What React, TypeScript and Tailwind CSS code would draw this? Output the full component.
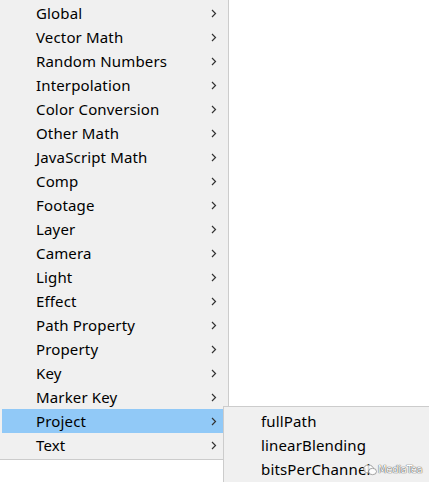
const items = [
  'Global',
  'Vector Math',
  'Random Numbers',
  'Interpolation',
  'Color Conversion',
  'Other Math',
  'JavaScript Math',
  'Comp',
  'Footage',
  'Layer',
  'Camera',
  'Light',
  'Effect',
  'Path Property',
  'Property',
  'Key',
  'Marker Key',
  'Project',
  'Text',
]

const subItems = ['fullPath', 'linearBlending', 'bitsPerChannel']

function Chevron() {
  return (
    <svg width="6" height="9" viewBox="0 0 6 9" className="shrink-0">
      <polyline points="1,1 4.5,4.5 1,8" fill="none" stroke="#333" strokeWidth="1.2" />
    </svg>
  )
}

export default function App() {
  return (
    <div
      className="relative w-[429px] h-[482px] bg-white overflow-hidden text-[15px] text-black"
      style={{ fontFamily: '"Noto Sans", "Liberation Sans", sans-serif' }}
    >
      <div className="w-[229px] bg-[#f0f0f0] border-r border-b border-[#cccccc] pt-px pb-[2px]">
        {items.map(name => (
          <div
            key={name}
            className={`h-6 ml-[2px] mr-[4px] flex items-center pl-[34px] pr-[7px] ${
              name === 'Project' ? 'bg-[#91c9f7]' : ''
            }`}
          >
            <span className="flex-1 leading-none tracking-[0.15px]">{name}</span>
            <Chevron />
          </div>
        ))}
      </div>

      {/* submenu for Project */}
      <div className="absolute left-[223px] top-[406px] w-[220px] h-[90px] bg-[#f0f0f0] border-l border-t border-[#cccccc] pt-[2px]">
        {subItems.map(name => (
          <div key={name} className="h-6 flex items-center pl-[37px] leading-none tracking-[0.15px]">
            {name}
          </div>
        ))}
      </div>

      {/* watermark */}
      <div
        className="absolute left-[363px] top-[462px] flex items-center gap-[1px] text-[10px] text-white [text-shadow:0_0_1px_#444,0_0_1px_#444]"
        style={{ fontFamily: '"DejaVu Sans", sans-serif' }}
      >
        <svg width="14" height="12" viewBox="0 0 14 12" className="opacity-80">
          <ellipse cx="5.5" cy="5" rx="5" ry="4" fill="white" stroke="#777" strokeWidth="0.8" />
          <ellipse cx="9.5" cy="7.5" rx="4" ry="3.2" fill="white" stroke="#777" strokeWidth="0.8" />
        </svg>
        <span className="tracking-[-0.3px]">MediaTea</span>
      </div>
    </div>
  )
}
